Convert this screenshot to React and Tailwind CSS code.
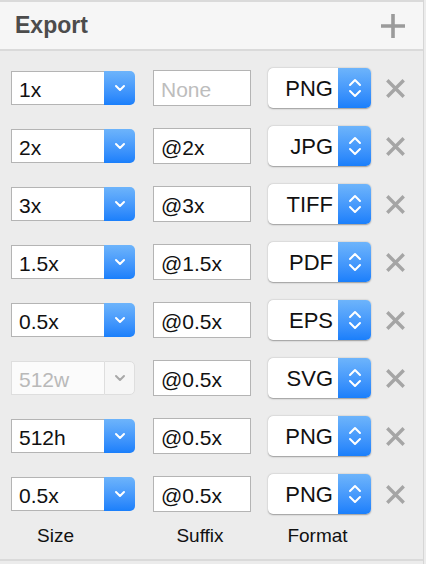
const rows = [
  { size: '1x', suffix: '', format: 'PNG' },
  { size: '2x', suffix: '@2x', format: 'JPG' },
  { size: '3x', suffix: '@3x', format: 'TIFF' },
  { size: '1.5x', suffix: '@1.5x', format: 'PDF' },
  { size: '0.5x', suffix: '@0.5x', format: 'EPS' },
  { size: '512w', suffix: '@0.5x', format: 'SVG', disabled: true },
  { size: '512h', suffix: '@0.5x', format: 'PNG' },
  { size: '0.5x', suffix: '@0.5x', format: 'PNG' },
];

const Chevron = ({ color }) => (
  <svg width="12" height="8" viewBox="0 0 12 8" fill="none">
    <path d="M2 2l4 4 4-4" stroke={color} strokeWidth="2" strokeLinecap="round" strokeLinejoin="round" />
  </svg>
);

const UpDown = () => (
  <svg width="14" height="24" viewBox="0 0 14 24" fill="none">
    <path d="M2 9l5-5 5 5" stroke="white" strokeWidth="2" strokeLinecap="round" strokeLinejoin="round" />
    <path d="M2 15l5 5 5-5" stroke="white" strokeWidth="2" strokeLinecap="round" strokeLinejoin="round" />
  </svg>
);

const SizeCombo = ({ value, disabled }) => (
  <div className="flex w-[124px] h-[34px]">
    <div
      className={`flex-1 flex items-center pl-[7px] pt-[3px] border border-r-0 ${
        disabled ? 'border-[#dedede] bg-[#fbfbfb] text-[#b9b9b9]' : 'border-[#b4b4b4] bg-white text-[#111]'
      }`}
    >
      {value}
    </div>
    {disabled ? (
      <div className="w-[31px] flex items-center justify-center rounded-r-[5px] border border-[#dedede] bg-[#f6f6f6]">
        <Chevron color="#a8a8a8" />
      </div>
    ) : (
      <div className="w-[31px] flex items-center justify-center rounded-r-[5px] bg-gradient-to-b from-[#6db4fb] to-[#1a7ffb]">
        <Chevron color="white" />
      </div>
    )}
  </div>
);

const FormatPopup = ({ value }) => (
  <div className="flex w-[103px] h-[40px] rounded-[5px] bg-white shadow-[0_0.5px_1.5px_rgba(0,0,0,0.35)]">
    <div className="flex-1 flex items-center justify-end pr-[5px] pt-[1px] text-[22px] text-[#111]">{value}</div>
    <div className="w-[33px] flex items-center justify-center rounded-r-[5px] bg-gradient-to-b from-[#6db4fb] to-[#1a7ffb]">
      <UpDown />
    </div>
  </div>
);

const RemoveIcon = () => (
  <svg width="19" height="19" viewBox="0 0 19 19" fill="none">
    <path d="M2.5 2.5l14 14M16.5 2.5l-14 14" stroke="#a5a5a5" strokeWidth="3.4" strokeLinecap="square" />
  </svg>
);

export default function App() {
  return (
    <div
      className="w-[426px] h-[564px] bg-[#ececec] flex flex-col overflow-hidden"
      style={{ fontFamily: '"Liberation Sans", Arial, sans-serif' }}
    >
      <div className="flex-1 flex flex-col w-[424px] border-r border-[#d6d6d6]">
        {/* Header */}
        <div className="h-[51px] shrink-0 border-t-2 border-b-2 border-[#dadada] bg-[#f6f6f6] flex items-center justify-between pl-[15px] pr-[18px]">
          <span className="text-[23px] font-bold text-[#4c4c4c] leading-none">Export</span>
          <svg width="24" height="24" viewBox="0 0 24 24" fill="none">
            <path d="M12 0v24M0 12h24" stroke="#9b9b9b" strokeWidth="3.6" />
          </svg>
        </div>

        {/* Rows */}
        <div className="flex flex-col pt-[8px] pl-[11px] text-[21px] leading-none">
          {rows.map((r, i) => (
            <div key={i} className="h-[58px] flex items-center">
              <SizeCombo value={r.size} disabled={r.disabled} />
              <div className="ml-[18px] w-[98px] h-[36px] border border-[#b4b4b4] bg-white flex items-center pl-[7px] pt-[2px]">
                {r.suffix ? (
                  <span className="text-[#111]">{r.suffix}</span>
                ) : (
                  <span className="text-[#bdbdbd]">None</span>
                )}
              </div>
              <div className="ml-[17px]">
                <FormatPopup value={r.format} />
              </div>
              <div className="ml-[15px] flex items-center">
                <RemoveIcon />
              </div>
            </div>
          ))}
        </div>

        {/* Labels */}
        <div className="flex pl-[11px] pt-[3px] text-[19px] leading-none text-[#111]">
          <div className="w-[89px] text-center">Size</div>
          <div className="ml-[53px] w-[98px] text-center pr-[4px]">Suffix</div>
          <div className="ml-[17px] w-[103px] text-center pr-[4px]">Format</div>
        </div>

        <div className="mt-auto mb-[3px] h-[2px] bg-[#dadada]" />
      </div>
    </div>
  );
}
